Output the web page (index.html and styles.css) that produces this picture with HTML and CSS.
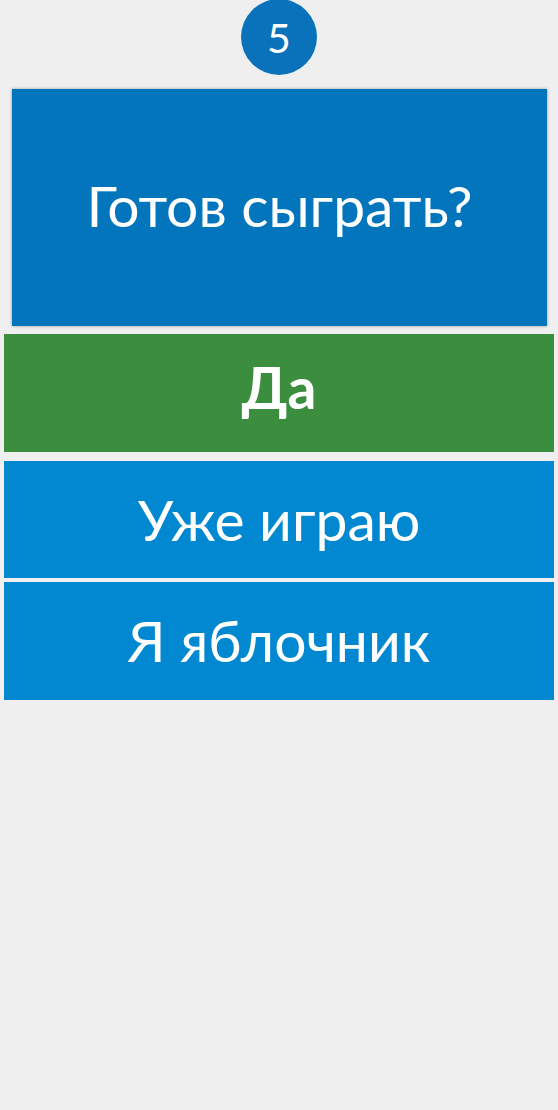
FILE: index.html
```html
<!DOCTYPE html>
<html lang="ru">
<head>
<meta charset="utf-8">
<link rel="stylesheet" href="styles.css">
</head>
<body>
<div class="page">
  <div class="badge">5</div>
  <div class="question">Готов сыграть?</div>
  <div class="answers">
    <div class="btn btn-yes">Да</div>
    <div class="group">
      <div class="btn btn-alt">Уже играю</div>
      <div class="btn btn-alt">Я яблочник</div>
    </div>
  </div>
</div>
</body>
</html>
```
FILE: styles.css
```css
html, body {
  margin: 0;
  padding: 0;
  background: #efefef;
}
.page {
  font-family: Lato, "Open Sans", sans-serif;
  color: #fff;
  padding: 0 4px;
  display: flex;
  flex-direction: column;
}
.badge {
  align-self: center;
  width: 76px;
  height: 76px;
  border-radius: 50%;
  background: #0a72bb;
  display: flex;
  align-items: center;
  justify-content: center;
  font-size: 41px;
  font-weight: 400;
  line-height: 1;
  margin-top: -1px;
}
.question {
  margin: 14px 7px 0 8px;
  height: 237px;
  background: #0275bc;
  box-shadow: 0 0 3px rgba(0,0,0,0.35);
  display: flex;
  align-items: center;
  justify-content: center;
  font-size: 57px;
  padding-bottom: 6px;
  box-sizing: border-box;
}
.answers {
  margin-top: 8px;
  display: flex;
  flex-direction: column;
  gap: 9px;
}
.group {
  display: flex;
  flex-direction: column;
  gap: 4px;
}
.btn {
  height: 118px;
  box-sizing: border-box;
  display: flex;
  align-items: center;
  justify-content: center;
  font-size: 57px;
}
.btn-yes {
  background: #3a8e3e;
  font-weight: 700;
  padding-bottom: 12px;
}
.btn-alt {
  background: #0288d1;
  height: 117px;
  padding-bottom: 2px;
}
.btn-alt + .btn-alt {
  height: 118px;
}
```
